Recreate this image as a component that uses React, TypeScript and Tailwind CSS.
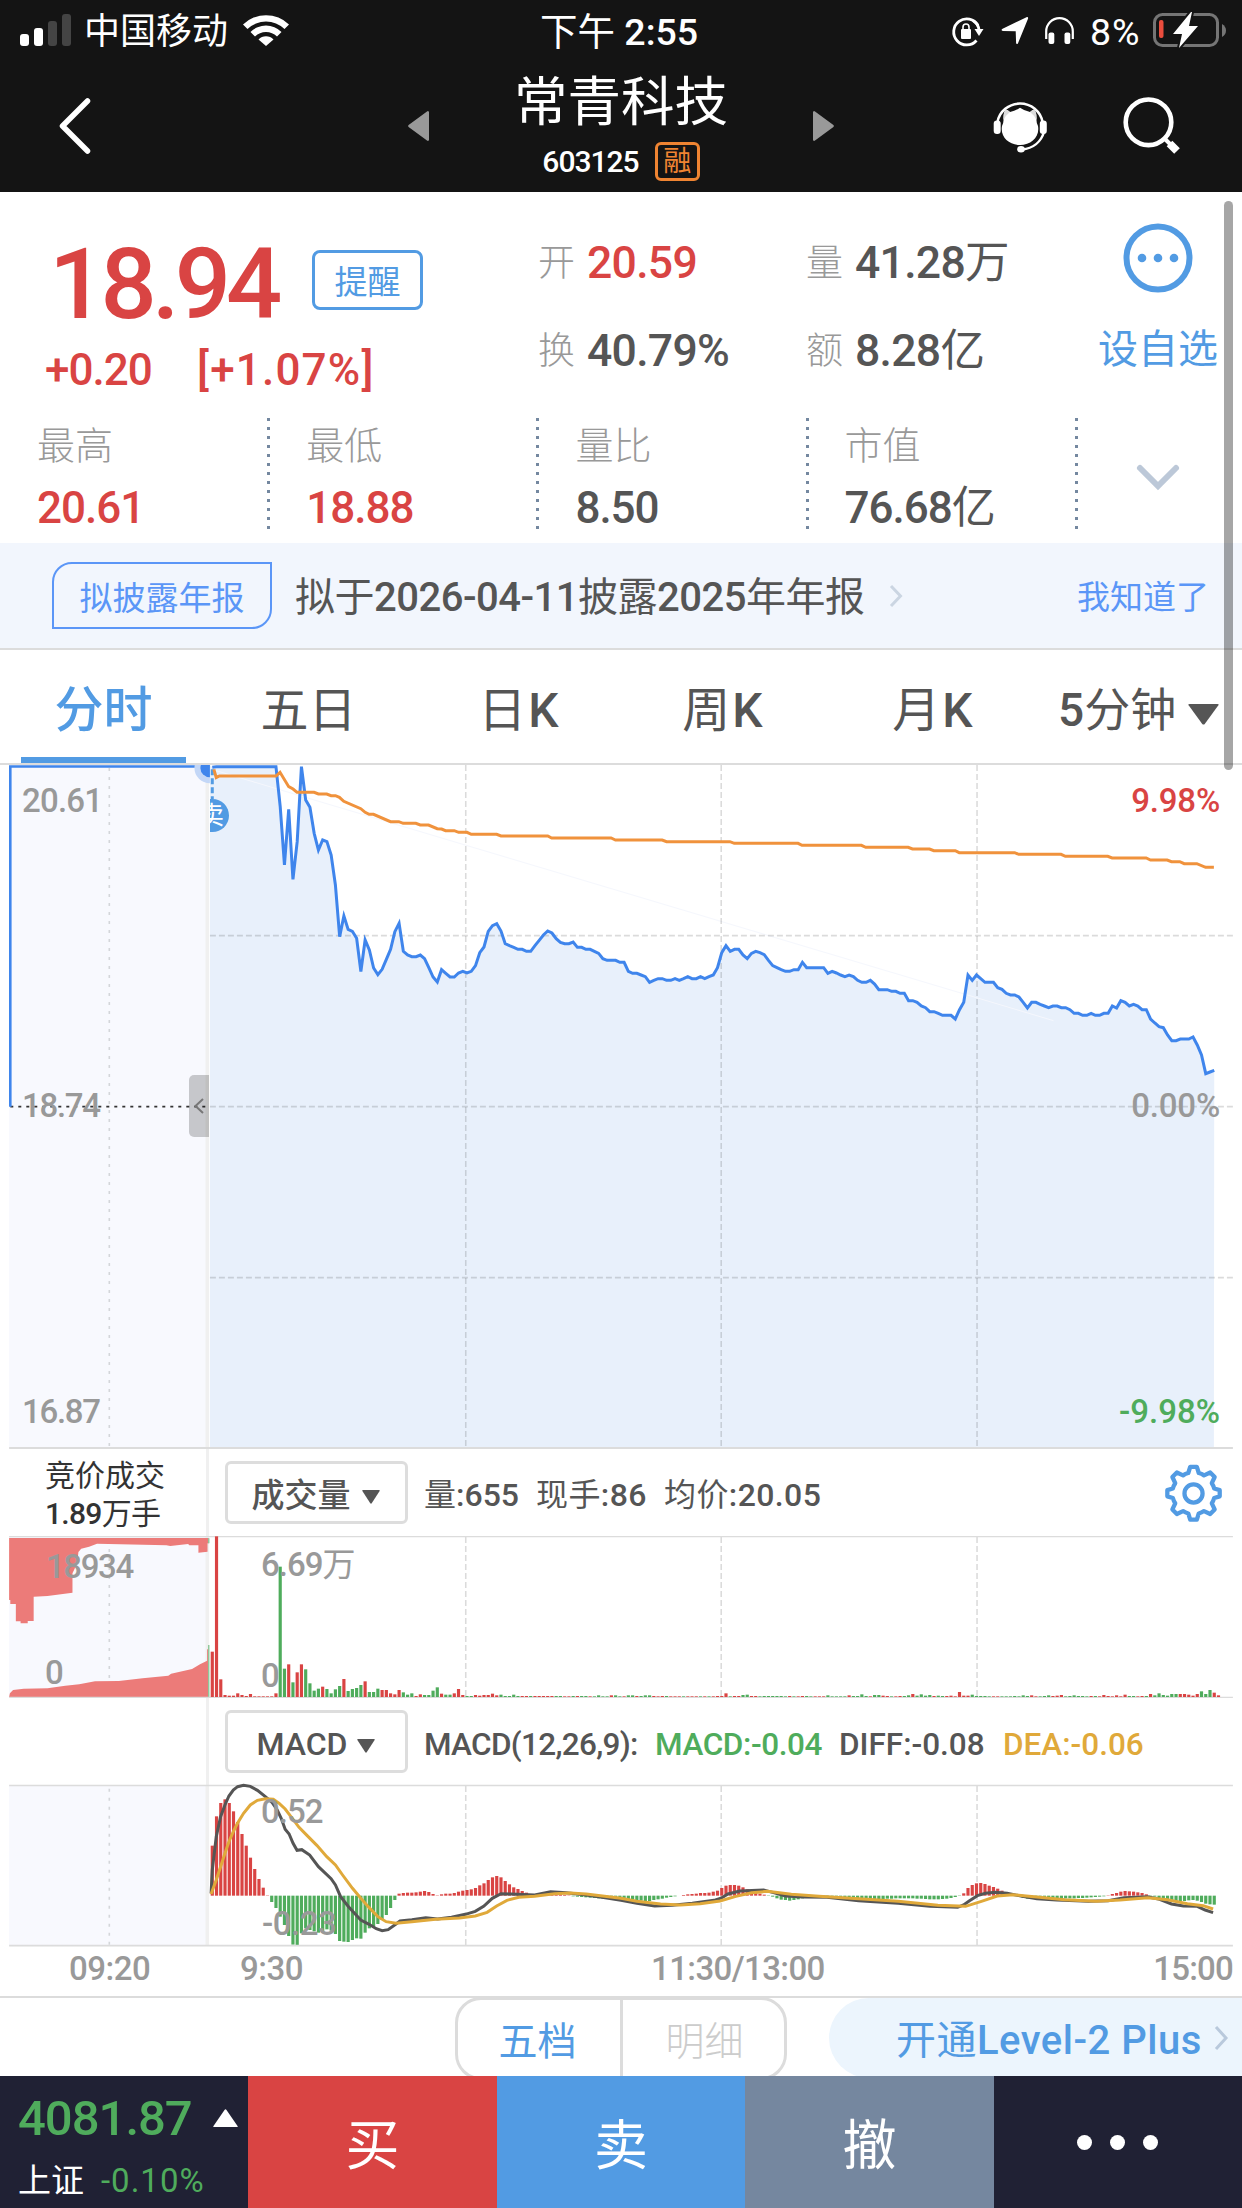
import React from 'react';

// Chart coordinates: x runs 0..3136 over the full width, y is three units per pixel
const FIRST_X = 536;
const STEP = 10.72;
const GRID_X = [1176, 1821, 2467];

const prices = [
  382, 380, 380, 380, 380, 380, 380, 380, 380, 380, 380, 380, 380, 380, 380, 380,
  500, 675, 508, 718, 605, 380, 480, 502, 580, 630, 600, 605, 645, 735, 890, 828,
  868, 874, 895, 995, 900, 930, 984, 1004, 988, 958, 928, 875, 850, 934, 945, 950,
  950, 945, 956, 983, 1011, 1026, 989, 1000, 1011, 1011, 999, 994, 999, 994, 977, 938,
  921, 874, 857, 851, 873, 911, 917, 922, 928, 928, 934, 934, 917, 901, 885, 873,
  879, 896, 907, 911, 911, 906, 922, 922, 928, 928, 934, 940, 956, 961, 961, 961,
  967, 967, 994, 1000, 1000, 1005, 1010, 1027, 1021, 1016, 1016, 1021, 1021, 1016, 1021, 1016,
  1010, 1016, 1016, 1010, 1016, 1010, 1005, 983, 938, 917, 934, 928, 928, 945, 956, 940,
  934, 938, 944, 961, 977, 983, 989, 994, 994, 989, 989, 967, 983, 983, 983, 983,
  983, 1000, 994, 999, 1005, 1010, 1005, 1010, 1021, 1027, 1027, 1021, 1032, 1049, 1049, 1049,
  1054, 1054, 1060, 1060, 1082, 1082, 1087, 1098, 1103, 1115, 1115, 1120, 1126, 1126, 1126, 1137,
  1109, 1087, 1005, 1021, 1005, 1016, 1027, 1027, 1027, 1043, 1048, 1060, 1065, 1065, 1071, 1087,
  1104, 1087, 1087, 1093, 1098, 1103, 1098, 1098, 1103, 1103, 1109, 1120, 1120, 1126, 1126, 1120,
  1126, 1126, 1120, 1120, 1098, 1104, 1082, 1087, 1098, 1093, 1098, 1109, 1109, 1137, 1149, 1160,
  1163, 1185, 1202, 1202, 1197, 1197, 1197, 1191, 1215, 1245, 1301, 1296, 1291
];

const averageLine =
  '540,388 546,413 554,408 697,408 707,397 729,440 740,447 750,457 793,457 804,462 825,462 836,467 847,467 857,472 868,484 911,506 922,517 932,523 943,523 986,545 1007,545 1018,550 1050,550 1061,555 1082,555 1104,566 1115,567 1125,572 1147,572 1158,577 1179,577 1190,583 1254,583 1265,588 1383,588 1393,594 1543,594 1554,600 1672,600 1683,605 1843,605 1854,610 2015,610 2025,616 2175,616 2186,622 2293,622 2304,627 2347,627 2358,632 2412,632 2422,638 2562,638 2572,643 2679,643 2690,649 2797,649 2808,654 2894,654 2905,660 2947,660 2958,665 2979,665 2990,671 3022,671 3044,682 3065,682';

// Positive bars are drawn red, negative ones green
const volumes = [
  136, 482, 53, 6, 4, 4, 11, 6, 3, 9, 2, 2, 2, 2, 2, 11,
  -391, -85, 98, -44, 74, 98, -83, -41, -19, -25, 31, -24, -11, -23, -33, 54,
  -18, -24, -27, -36, 47, -15, -15, -25, 21, 21, 11, 8, 21, -14, -7, -11,
  3, 8, -6, -6, -19, -29, 10, -7, -7, 11, 24, 6, -3, -3, 6, 4,
  6, 6, 10, 5, -7, -3, -3, -7, -3, 3, 3, -3, 3, 3, 3, 3,
  3, -3, -3, 2, 2, -3, 3, -3, -3, 2, -2, -5, -2, -2, 5, -5,
  -2, 2, -5, -5, 3, -3, -5, -5, 3, 2, 3, -3, 2, 2, 2, -2,
  2, 2, 2, -2, 2, -2, 2, 3, 3, 11, -2, 3, 3, -6, -7, 3,
  3, -2, -3, -3, -3, -3, -3, -2, 3, -2, 2, 3, -3, -2, 2, 2,
  2, -5, -2, -2, -2, -2, 5, -3, -3, -8, -3, 2, -6, -6, 4, 3,
  -2, 2, 3, -3, -5, 9, -4, -8, -4, -6, 3, -4, -3, 3, 4, 2,
  15, 4, 4, -7, -3, -3, -3, -2, 2, 2, -2, -2, -2, -3, -2, -5,
  -3, 5, 2, -2, -3, -5, 3, 4, 6, -2, -3, -5, -3, -3, -2, 3,
  -3, 2, 6, 3, 2, 5, 2, 7, -3, -3, 2, 3, -3, 9, -5, -11,
  -6, -4, -9, -9, 9, 9, 7, 4, 9, -17, -9, -21, 13, 5
];

const macdBars = [
  150, 238, 278, 289, 278, 253, 221, 185, 150, 114, 80, 50, 24, 1, -19, -37,
  -63, -88, -121, -147, -149, -113, -98, -103, -107, -111, -107, -101, -105, -115, -136, -138,
  -139, -133, -128, -129, -111, -98, -93, -85, -73, -58, -37, -13, 6, 8, 9, 9,
  10, 12, 14, 11, 5, 1, 4, 6, 6, 8, 12, 15, 17, 19, 23, 31,
  37, 47, 55, 59, 55, 44, 34, 25, 20, 14, 9, 5, 3, 5, 5, 6,
  6, 6, 4, 2, 1, -2, -3, -4, -5, -6, -7, -8, -9, -10, -11, -12,
  -12, -11, -12, -12, -14, -15, -16, -16, -13, -11, -9, -6, -4, -2, 0, 2,
  4, 5, 6, 8, 8, 9, 12, 15, 23, 30, 32, 32, 30, 25, 19, 14,
  10, 6, 3, -1, -3, -8, -12, -13, -15, -13, -11, -8, -4, -3, -3, -3,
  -3, -4, -4, -5, -6, -7, -8, -8, -9, -10, -10, -10, -11, -10, -10, -9,
  -9, -8, -8, -8, -8, -8, -9, -9, -10, -11, -11, -11, -10, -9, -7, -4,
  -1, 7, 23, 32, 37, 38, 35, 30, 26, 21, 15, 9, 4, -1, -4, -7,
  -9, -9, -9, -9, -9, -9, -9, -9, -9, -8, -8, -8, -7, -7, -6, -5,
  -4, -3, -2, 1, 5, 8, 12, 14, 13, 12, 10, 8, 4, -1, -3, -7,
  -10, -12, -15, -18, -18, -16, -14, -13, -15, -19, -24, -26, -27
];

const diffPath =
  'M533 610L536 540L546 440L557 380L568 345L578 318L589 300L600 290L615 286L632 289L650 301L670 320L686 336L700 360L710 385L720 418L730 432L740 460L750 481L762 479L782 495L804 530L836 566L847 585L860 620L880 650L911 690L932 703L950 716L965 722L980 719L1000 702L1010 693L1040 689L1075 683L1105 687L1140 682L1175 673L1200 664L1222 648L1243 625L1265 611L1290 612L1350 615L1390 605L1430 608L1480 615L1520 622L1568 631L1608 640L1653 648L1698 646L1748 640L1803 631L1822 624L1838 612L1868 603L1928 600L1953 608L1983 618L2028 621L2088 622L2168 632L2268 640L2348 649L2418 652L2433 645L2448 632L2468 617L2488 610L2513 607L2543 610L2578 618L2618 626L2668 630L2748 634L2798 632L2838 623L2898 620L2928 628L2958 642L2988 648L3023 649L3043 660L3063 668';

const deaPath =
  'M533 612L546 570L557 530L568 490L578 455L589 425L600 399L615 370L632 345L650 331L670 326L690 328L705 340L720 357L740 388L755 412L775 436L800 466L825 500L847 525L865 555L890 595L911 625L932 653L954 680L975 695L1000 700L1040 695L1100 688L1160 684L1200 678L1230 667L1254 648L1280 631L1310 622L1350 619L1400 611L1440 609L1480 612L1568 625L1608 634L1668 642L1718 645L1768 641L1818 633L1858 619L1898 608L1938 604L1998 613L2068 619L2168 626L2268 634L2368 646L2438 649L2478 634L2518 618L2558 614L2618 621L2688 629L2768 634L2828 630L2898 623L2948 629L2998 641L3038 647L3063 657';

const pricePoints = prices.map((y, i) => `${FIRST_X + i * STEP},${y}`).join(' ');

// Chinese runs keep the regular weight inside medium-weight numbers
const Mixed = ({ children }: { children: string }) => (
  <>
    {children.split(/([\u4e00-\u9fff]+)/).map((part, i) =>
      i % 2 ? <span key={i} className="font-normal">{part}</span> : part
    )}
  </>
);

const GridLines = ({ top, bottom }: { top: number; bottom: number }) => (
  <>
    {GRID_X.map((x) => (
      <line key={x} x1={x} x2={x} y1={top} y2={bottom} stroke="#000" strokeOpacity={0.14} strokeWidth={1.6} strokeDasharray="6 3" vectorEffect="non-scaling-stroke" />
    ))}
  </>
);

const AuctionPanel = ({ top, bottom }: { top: number; bottom: number }) => (
  <>
    <rect x={23} y={top} width={497} height={bottom - top} fill="#f8f9fe" />
    <line x1={276} x2={276} y1={top + 9} y2={bottom} stroke="#d4d6da" strokeWidth={1.6} strokeDasharray="3 6" vectorEffect="non-scaling-stroke" />
  </>
);

const Bars = ({ data, base, upward }: { data: number[]; base: number; upward?: boolean }) => (
  <>
    {data.map((v, i) => (
      <rect
        key={i}
        x={FIRST_X + i * STEP - 4}
        y={v > 0 || upward ? base - Math.abs(v) : base}
        width={8}
        height={Math.abs(v)}
        fill={v > 0 ? '#d94443' : '#4fac5c'}
      />
    ))}
  </>
);

const Triangle = ({ className }: { className: string }) => (
  <svg viewBox="0 0 20 16" preserveAspectRatio="none" className={className}>
    <path d="M1 0h18q1.200 0 .6 1L10.800 15.200q-.8 1-1.600 0L.4 1Q-.2 0 1 0z" fill="currentColor" />
  </svg>
);

const StatusBar = () => (
  <div className="flex h-[64px] items-start text-white">
    <svg className="ml-[19px] mt-[13px] h-[34px] w-[53px]" viewBox="19 13 53 34">
      <rect x="20" y="34" width="9" height="12" rx="3" fill="#fff" />
      <rect x="34" y="28" width="9" height="18" rx="3" fill="#fff" />
      <rect x="48" y="21" width="9" height="25" rx="3" fill="#444" />
      <rect x="62" y="14" width="9" height="32" rx="3" fill="#444" />
    </svg>
    <span className="ml-[12px] mt-[6px] w-[146px] text-[36px] leading-[52px]">中国移动</span>
    <svg className="ml-[12px] mt-[12px] h-[36px] w-[48px]" viewBox="242 12 48 36">
      <path d="M243 24.500a33 33 0 0 1 46 0l-4.500 4.500a26.500 26.500 0 0 0-37 0z" fill="#fff" />
      <path d="M250.500 32a22 22 0 0 1 31 0l-4.500 4.500a15.500 15.500 0 0 0-22 0z" fill="#fff" />
      <path d="M258.500 39.500a10.500 10.500 0 0 1 15 0L266 46z" fill="#fff" />
    </svg>
    <span className="ml-[250px] mt-[6px] w-[162px] whitespace-nowrap text-[37.500px] font-medium leading-[52px]"><Mixed>下午 2:55</Mixed></span>
    <svg className="ml-[247px] mt-[10px] h-[40px] w-[130px]" viewBox="949 10 130 40">
      <path d="M978 25.500A13 13 0 1 0 976.500 40.500" fill="none" stroke="#fff" strokeWidth="2.800" />
      <path d="M973 20.500A13 13 0 0 1 979 30" fill="none" stroke="#fff" strokeWidth="2.800" />
      <path d="M974.500 29h9l-4.500 7z" fill="#fff" />
      <rect x="961" y="29" width="10" height="10" rx="1" fill="#fff" />
      <path d="M963 30v-3a3 3 0 0 1 6 0V30" fill="none" stroke="#fff" strokeWidth="1.600" />
      <path d="M1026.500 17.200c1.200-.5 2 .2 1.500 1.500l-10 24.500c-.6 1.300-1.800 1.200-1.900-.2l-.4-11.700-12.800-.4c-1.700 0-1.700-1.500-.3-2.100z" fill="#fff" />
      <path d="M1046.200 39V31.500a13.300 13.300 0 0 1 26.600 0V39" fill="none" stroke="#fff" strokeWidth="2.200" />
      <rect x="1048.500" y="32.500" width="5.800" height="11.500" rx="2" fill="#fff" />
      <rect x="1064.500" y="32.500" width="5.800" height="11.500" rx="2" fill="#fff" />
    </svg>
    <span className="ml-[11px] mt-[6px] w-[57px] text-[37.500px] leading-[52px] tracking-[1px]">8%</span>
    <svg className="ml-[4px] mt-[10px] h-[42px] w-[80px]" viewBox="1151 10 80 42">
      <rect x="1154.500" y="14.500" width="63" height="31" rx="8" fill="none" stroke="#757575" strokeWidth="3" />
      <path d="M1222 24v13q4-2.500 4-6.500t-4-6.500z" fill="#757575" />
      <rect x="1159" y="20" width="4.500" height="18" rx="2" fill="#eb4d3d" />
      <path d="M1191 12l-18 22h9l-3 14 19-22h-9l3-14z" fill="#fff" stroke="#141414" strokeWidth="4" paintOrder="stroke" strokeLinejoin="round" />
    </svg>
  </div>
);

const Header = () => (
  <div className="grid h-[128px] grid-cols-[400px_1fr_400px] text-white">
    <div className="pl-[57px] pt-[33px]">
      <svg className="h-[58px] w-[36px]" viewBox="58 97 36 58">
        <path d="M88.500 101L63.500 126L88.500 151" fill="none" stroke="#fff" strokeWidth="5.500" strokeLinecap="round" strokeLinejoin="round" />
      </svg>
    </div>
    <div className="flex justify-between px-[8px] text-[#999]">
      <svg className="mt-[47px] h-[30px] w-[21px]" viewBox="0 0 21 30"><path d="M21 1v28q-.8 1.500-2 .5L.6 16q-.9-1 0-2L19 .5q1.200-1 2 .5z" fill="currentColor" /></svg>
      <div className="flex flex-col items-center text-white">
        <div className="mt-[6px] text-[53.500px] leading-[66px]">常青科技</div>
        <div className="mt-[5px] flex items-center">
          <span className="mt-[1px] text-[30px] font-medium leading-[39px] tracking-[-1px]">603125</span>
          <span className="ml-[16px] flex h-[39px] w-[45px] items-center justify-center rounded-[6px] border-[3px] border-[#ef8432] pt-[2px] text-[28px] leading-none text-[#ef8432]">融</span>
        </div>
      </div>
      <svg className="mt-[47px] h-[30px] w-[21px] -scale-x-100" viewBox="0 0 21 30"><path d="M21 1v28q-.8 1.500-2 .5L.6 16q-.9-1 0-2L19 .5q1.200-1 2 .5z" fill="currentColor" /></svg>
    </div>
    <div className="flex pl-[149px] pt-[30px]">
      <svg className="h-[60px] w-[60px]" viewBox="991 94 60 60">
        <path d="M997.500 122a22.800 22 0 0 1 45 0" fill="none" stroke="#fff" strokeWidth="2.500" />
        <rect x="993.700" y="120.500" width="7" height="13.500" rx="3.300" fill="#fff" />
        <rect x="1039.800" y="120.500" width="7" height="13.500" rx="3.300" fill="#fff" />
        <path d="M1044 132c-3 10-11 16.500-22 17.500" fill="none" stroke="#fff" strokeWidth="2.500" />
        <ellipse cx="1021" cy="149.300" rx="3.800" ry="3.300" fill="#fff" />
        <path d="M1003.500 118q.3-7 2.500-8.500 1.500 0 4 2.500 5.500-1 10-4.200 4.500 3.200 10 4.200 2.500-2.500 4-2.500 2.200 1.500 2.500 8.500-.5 4 1.500 8c2 11-7 19-18 19s-20-8-18-19q2-4 1.500-8z" fill="#fff" />
        <path d="M1006 109.500q2 .5 4 2.500-4 3-6.500 8-.5-8.500 2.500-10.500zM1034 109.500q-2 .5-4 2.500 4 3 6.500 8 .5-8.500-2.500-10.500z" fill="#ddd" />
      </svg>
      <svg className="ml-[70px] h-[64px] w-[64px]" viewBox="1121 94 64 64">
        <circle cx="1148.500" cy="122.300" r="22.800" fill="none" stroke="#fff" strokeWidth="4.600" />
        <path d="M1164 138l6 6" stroke="#fff" strokeWidth="4" />
        <path d="M1169.500 143.500l7.500 7.500" stroke="#fff" strokeWidth="8" />
      </svg>
    </div>
  </div>
);

const quotes = [
  { label: '开', value: '20.59', color: 'text-[#d94443]' },
  { label: '量', value: '41.28万', color: 'text-[#555]' },
  { label: '换', value: '40.79%', color: 'text-[#555]' },
  { label: '额', value: '8.28亿', color: 'text-[#555]' }
];

const stats = [
  { label: '最高', value: '20.61', color: 'text-[#d94443]' },
  { label: '最低', value: '18.88', color: 'text-[#d94443]' },
  { label: '量比', value: '8.50', color: 'text-[#555]' },
  { label: '市值', value: '76.68亿', color: 'text-[#555]' }
];

const QuotePanel = () => (
  <div className="h-[351px]">
    <div className="flex h-[226px]">
      <div className="w-[538px]">
        <div className="flex">
          <span className="ml-[49px] mt-[42px] w-[263px] text-[99px] font-medium leading-[100px] tracking-[-4.800px] text-[#d94443]">18.94</span>
          <span className="mt-[58px] flex h-[60px] w-[111px] items-center justify-center rounded-[8px] border-[3px] border-[#529be3] pt-[4px] text-[33px] leading-none text-[#529be3]">提醒</span>
        </div>
        <div className="ml-[45px] mt-[11px] flex whitespace-nowrap text-[44px] font-medium leading-[50px] text-[#d94443]">
          <span className="w-[152px] tracking-[-1px]">+0.20</span>
          <span className="tracking-[1.200px]">[+1.07%]</span>
        </div>
      </div>
      <div className="grid w-[540px] grid-cols-[268px_1fr] grid-rows-[88px_88px] pt-[27px]">
        {quotes.map((quote) => (
          <div key={quote.label} className="flex items-center whitespace-nowrap">
            <span className="w-[49px] pt-[1px] text-[37px] font-light text-[#999]">{quote.label}</span>
            <span className={`text-[44.500px] font-medium tracking-[-0.700px] ${quote.color}`}><Mixed>{quote.value}</Mixed></span>
          </div>
        ))}
      </div>
      <div className="flex w-[160px] flex-col items-center">
        <svg className="mt-[31px] h-[70px] w-[70px]" viewBox="0 0 70 70">
          <circle cx="35" cy="35" r="31.500" fill="none" stroke="#529be3" strokeWidth="6" />
          <circle cx="19" cy="35" r="4.300" fill="#529be3" />
          <circle cx="35" cy="35" r="4.300" fill="#529be3" />
          <circle cx="51" cy="35" r="4.300" fill="#529be3" />
        </svg>
        <span className="mt-[29px] whitespace-nowrap text-[40px] leading-[56px] text-[#529be3]">设自选</span>
      </div>
    </div>
    <div className="flex h-[112px]">
      {stats.map((stat) => (
        <div key={stat.label} className="flex w-[269.200px] justify-between">
          <div className="pl-[37px] whitespace-nowrap">
            <div className="mt-[1px] text-[38px] font-light leading-[54px] text-[#999]">{stat.label}</div>
            <div className={`mt-[8px] text-[44px] font-medium leading-[54px] tracking-[-1px] ${stat.color}`}><Mixed>{stat.value}</Mixed></div>
          </div>
          <div className="-mr-[1px] w-[3px] bg-[repeating-linear-gradient(to_bottom,#7488a0_0px_3px,transparent_3px_9px)]" />
        </div>
      ))}
      <svg className="ml-[58px] mt-[44px] h-[30px] w-[46px]" viewBox="0 0 46 30">
        <path d="M5 6l18 18L41 6" fill="none" stroke="#bcc8d8" strokeWidth="6" strokeLinecap="round" />
      </svg>
    </div>
  </div>
);

const NoticeBar = () => (
  <div className="flex h-[107px] items-center border-b-[2px] border-[#dcdcdc] bg-[#f2f6fd] whitespace-nowrap">
    <span className="ml-[52px] flex h-[67px] w-[220px] items-center justify-center rounded-br-[20px] rounded-tl-[20px] border-[2px] border-[#5b96f7] pt-[5px] text-[33px] leading-none text-[#5b96f7]">拟披露年报</span>
    <span className="ml-[23px] w-[594px] pt-[5px] text-[40px] font-medium tracking-[-0.500px] text-[#555]"><Mixed>拟于2026-04-11披露2025年年报</Mixed></span>
    <svg className="h-[24px] w-[14px]" viewBox="0 0 14 24"><path d="M2 2l9.500 10L2 22" fill="none" stroke="#cbd5e2" strokeWidth="3" /></svg>
    <span className="ml-[174px] pt-[5px] text-[33px] text-[#5b96f7]">我知道了</span>
  </div>
);

const Tabs = () => (
  <div className="flex h-[115px] border-b-[2px] border-[#dcdcdc] text-[48px] leading-[121px] text-[#555] whitespace-nowrap">
    <div className="ml-[21px] h-[113px] w-[165px] border-b-[6px] border-[#529be3] text-center text-[49px] font-medium text-[#529be3]">分时</div>
    <div className="w-[245px] text-center">五日</div>
    <div className="w-[175px] text-center">日<span className="ml-[2px] font-medium">K</span></div>
    <div className="w-[233px] text-center">周<span className="ml-[2px] font-medium">K</span></div>
    <div className="w-[187px] text-center">月<span className="ml-[2px] font-medium">K</span></div>
    <div className="ml-[32px] flex text-[46px]">
      <span className="font-medium">5</span>分钟
      <Triangle className="ml-[12px] mt-[54px] h-[21px] w-[31px]" />
    </div>
  </div>
);

const PriceChart = () => (
  <div className="relative h-[684px] text-[33px] font-medium leading-[40px] tracking-[-0.800px] text-[#999]">
    <svg className="block h-[684px] w-full" viewBox="0 375 3136 2052" preserveAspectRatio="none">
      <AuctionPanel top={375} bottom={2425} />
      <rect x={519} y={384} width={9} height={2043} fill="#f0f0f0" />
      <polygon points={`530,375 ${pricePoints} 3065,2425 530,2425`} fill="#e8f0fb" />
      <line x1={540} y1={390} x2={2660} y2={1142} stroke="#f5f7fd" strokeWidth={1} vectorEffect="non-scaling-stroke" />
      <GridLines top={375} bottom={2425} />
      {[887, 1400, 1913].map((y) => (
        <line key={y} x1={530} x2={3113} y1={y} y2={y} stroke="#000" strokeOpacity={0.14} strokeWidth={1.600} strokeDasharray="6 3" vectorEffect="non-scaling-stroke" />
      ))}
      <line x1={26} x2={530} y1={1400} y2={1400} stroke="#333" strokeWidth={1.800} strokeDasharray="3 5" vectorEffect="non-scaling-stroke" />
      <path d="M26 1400V379.500H530" fill="none" stroke="#3f85ec" strokeWidth={2.600} vectorEffect="non-scaling-stroke" />
      <ellipse cx={530} cy={384} rx={39} ry={46} fill="#c3d7f7" clipPath="url(#auction)" />
      <ellipse cx={530} cy={384} rx={24} ry={28} fill="#3f85ec" clipPath="url(#auction)" />
      <clipPath id="auction"><rect x={0} y={375} width={530} height={100} /></clipPath>
      <path d="M536 388V478" stroke="#529be3" strokeWidth={3} strokeDasharray="6 3" vectorEffect="non-scaling-stroke" />
      <polyline points={pricePoints} fill="none" stroke="#3f85ec" strokeWidth={3} vectorEffect="non-scaling-stroke" />
      <polyline points={averageLine} fill="none" stroke="#f0923c" strokeWidth={3} vectorEffect="non-scaling-stroke" />
      <line x1={23} x2={3113} y1={2424} y2={2424} stroke="#dcdcdc" strokeWidth={2} vectorEffect="non-scaling-stroke" />
    </svg>
    <div className="absolute left-[210px] top-[34px] h-[33px] w-[19px] overflow-hidden rounded-r-full bg-[#529be3]">
      <span className="absolute left-[-11px] top-0 text-[25px] font-normal leading-[34px] text-white">卖</span>
    </div>
    <div className="absolute left-[189px] top-[310px] flex h-[62px] w-[20px] items-center justify-center rounded-l-[5px] bg-black/20">
      <svg className="h-[16px] w-[10px]" viewBox="0 0 10 16"><path d="M9 1L1.500 8L9 15" fill="none" stroke="#777" strokeWidth="2" /></svg>
    </div>
    <span className="absolute left-[22px] top-[16px]">20.61</span>
    <span className="absolute left-[22px] top-[321px] tracking-[-1.300px]">18.74</span>
    <span className="absolute left-[22px] top-[627px] tracking-[-1.300px]">16.87</span>
    <span className="absolute right-[22px] top-[16px] tracking-[-0.200px] text-[#d94443]">9.98%</span>
    <span className="absolute right-[22px] top-[321px] tracking-[-0.200px]">0.00%</span>
    <span className="absolute right-[22px] top-[627px] tracking-normal text-[#4fac5c]">-9.98%</span>
  </div>
);

const VolumeHeader = () => (
  <div className="flex h-[87px] items-center text-[#555] whitespace-nowrap">
    <div className="flex h-full w-[209px] flex-col justify-center border-r-[3px] border-[#f0f0f0] pl-[45px] pt-[5px] text-[30px] leading-[38px] text-[#333]">
      <span>竞价成交</span>
      <span className="font-medium tracking-[-0.700px]"><Mixed>1.89万手</Mixed></span>
    </div>
    <div className="ml-[16px] flex h-[63px] w-[183px] items-center justify-center rounded-[6px] border-[3px] border-[#ddd] pr-[2px] pt-[5px] text-[33px] font-medium leading-none">
      成交量
      <Triangle className="ml-[11px] mt-[4px] h-[14px] w-[18px]" />
    </div>
    <span className="ml-[16px] w-[112px] pt-[5px] text-[32px] font-medium"><Mixed>量:655</Mixed></span>
    <span className="w-[128px] pt-[5px] text-[32px] font-medium tracking-[0.400px]"><Mixed>现手:86</Mixed></span>
    <span className="pt-[5px] text-[32px] font-medium tracking-[0.400px]"><Mixed>均价:20.05</Mixed></span>
    <svg className="ml-auto mr-[18px] h-[60px] w-[60px]" viewBox="-31 -31.500 63 63">
      <path
        d="M-3.500 -27.500h7l2 6.500q3 .8 5.500 2.500l6.500-3 4.700 4.700-3 6.500q1.700 2.500 2.500 5.500l5.800 1.800v6.500l-5.800 1.800q-.8 3-2.500 5.500l3 6.500-4.700 4.700-6.500-3q-2.500 1.700-5.500 2.500l-2 6.500h-7l-2-6.500q-3-.8-5.500-2.500l-6.500 3-4.700-4.700 3-6.500q-1.700-2.500-2.500-5.500l-5.800-1.800v-6.500l5.800-1.800q.8-3 2.500-5.500l-3-6.500 4.700-4.700 6.500 3q2.500-1.700 5.500-2.500z"
        fill="none"
        stroke="#529be3"
        strokeWidth="4.500"
        strokeLinejoin="round"
      />
      <circle cy="0.500" r="9.500" fill="none" stroke="#529be3" strokeWidth="4.500" />
    </svg>
  </div>
);

const VolumeChart = () => (
  <div className="relative h-[162px] text-[33px] font-medium leading-[40px] tracking-[-1px] text-[#999]">
    <svg className="block h-[162px] w-full" viewBox="0 408 3136 486" preserveAspectRatio="none">
      <AuctionPanel top={411} bottom={891} />
      <rect x={519} y={408} width={9} height={486} fill="#f0f0f0" />
      <GridLines top={411} bottom={891} />
      <path d="M23 414H527V430H524V455L501 458V436H478L475 432L430 438L420 436L245 431L225 440L205 446L198 456L195 490L183 520V578L120 588L85 590V663H70V670H52V664H40V612H26V600H23z" fill="#ec7b79" />
      <path d="M23 891L25 880L33 870L60 866L120 865L165 857L200 853L240 844L300 843L360 835L425 827L432 821L485 807L505 793L523 782V748H527V891z" fill="#ec7b79" />
      <path d="M527 735V891M527 415V430" stroke="#8fc79a" strokeWidth={1.500} vectorEffect="non-scaling-stroke" />
      <path d="M23 409.500H3113M23 892.500H3113" stroke="#dcdcdc" strokeWidth={1.600} vectorEffect="non-scaling-stroke" />
      <Bars data={volumes} base={891} upward />
    </svg>
    <span className="absolute left-[46px] top-[11px] tracking-[-1.400px]">18934</span>
    <span className="absolute left-[45px] top-[117px]">0</span>
    <span className="absolute left-[261px] top-[9px]"><Mixed>6.69万</Mixed></span>
    <span className="absolute left-[261px] top-[120px]">0</span>
  </div>
);

const MacdHeader = () => (
  <div className="flex h-[87px] items-center text-[31.500px] font-medium text-[#555] whitespace-nowrap">
    <div className="h-full w-[209px] border-r-[3px] border-[#f0f0f0]" />
    <div className="ml-[16px] flex h-[63px] w-[183px] items-center justify-center rounded-[6px] border-[3px] border-[#ddd] pr-[2px] pt-[4px] text-[32px] leading-none">
      MACD
      <Triangle className="ml-[9px] mt-[5px] h-[14px] w-[18px]" />
    </div>
    <span className="ml-[16px] w-[231px] pt-[6px] tracking-[-0.700px]">MACD(12,26,9):</span>
    <span className="w-[184px] pt-[6px] tracking-[-0.400px] text-[#4fac5c]">MACD:-0.04</span>
    <span className="w-[164px] pt-[6px]">DIFF:-0.08</span>
    <span className="pt-[6px] text-[#e0a93a]">DEA:-0.06</span>
  </div>
);

const MacdChart = () => (
  <div className="relative h-[161px] text-[33px] font-medium leading-[40px] tracking-[-1px] text-[#999]">
    <svg className="block h-[161px] w-full overflow-visible" viewBox="0 285 3136 483" preserveAspectRatio="none">
      <AuctionPanel top={287} bottom={766} />
      <rect x={519} y={285} width={9} height={483} fill="#f0f0f0" />
      <GridLines top={288} bottom={766} />
      <Bars data={macdBars} base={617} />
      <path d="M23 286.500H3113M23 767H3113" stroke="#dcdcdc" strokeWidth={1.600} vectorEffect="non-scaling-stroke" />
      <path d={diffPath} fill="none" stroke="#555" strokeWidth={3} vectorEffect="non-scaling-stroke" />
      <path d={deaPath} fill="none" stroke="#e0a93a" strokeWidth={3} vectorEffect="non-scaling-stroke" />
    </svg>
    <span className="absolute left-[261px] top-[7px]">0.52</span>
    <span className="absolute left-[262px] top-[119px] tracking-[-0.500px]">-0.23</span>
  </div>
);

const TimeAxis = () => (
  <div className="flex h-[50px] pt-[1px] text-[33px] font-medium leading-[44px] tracking-[-0.500px] text-[#999] whitespace-nowrap">
    <span className="ml-[69px] w-[171px]">09:20</span>
    <span className="w-[411px]">9:30</span>
    <span className="tracking-[-0.600px]">11:30/13:00</span>
    <span className="ml-auto mr-[9px] tracking-[-0.800px]">15:00</span>
  </div>
);

const LevelRow = () => (
  <div className="flex h-[80px] overflow-hidden border-t-[2px] border-[#dcdcdc] whitespace-nowrap">
    <div className="-mt-[1px] ml-[455px] flex h-[83px] w-[332px] shrink-0 rounded-[26px] border-[3px] border-[#dcdcdc] text-[39px] leading-[84px]">
      <span className="w-[165px] border-r-[3px] border-[#dcdcdc] pr-[3px] text-center text-[#529be3]">五档</span>
      <span className="w-[161px] pl-[2px] text-center font-light text-[#ccc]">明细</span>
    </div>
    <div className="ml-[42px] flex h-[80px] w-[500px] shrink-0 items-center rounded-l-full bg-[#ecf5fd] pl-[67px] text-[40px] text-[#529be3]">
      <span className="w-[318px] pt-[5px] font-medium tracking-[0.500px]"><Mixed>开通Level-2 Plus</Mixed></span>
      <svg className="h-[26px] w-[15px]" viewBox="0 0 15 26"><path d="M2 2l10 11L2 24" fill="none" stroke="#b9c9dc" strokeWidth="3" /></svg>
    </div>
  </div>
);

const ActionBar = () => (
  <div className="grid h-[132px] grid-cols-5 grid-rows-[132px] text-center text-[54px] leading-[142px] text-white">
    <div className="bg-[#202134] pl-[18px] pt-[15px] text-left">
      <div className="flex items-center">
        <span className="w-[195px] text-[49px] font-medium leading-[56px] tracking-[-1px] text-[#4fac5c]">4081.87</span>
        <Triangle className="-mt-[3px] h-[18px] w-[25px] -scale-y-100" />
      </div>
      <div className="mt-[9px] flex items-center text-[33px] leading-[50px]">
        上证<span className="ml-[17px] tracking-[1px] text-[#4fac5c]">-0.10%</span>
      </div>
    </div>
    <div className="bg-[#d94443]">买</div>
    <div className="bg-[#529be3]">卖</div>
    <div className="bg-[#75879f]">撤</div>
    <div className="flex items-center justify-center gap-[18px] bg-[#202134]">
      <i className="h-[15px] w-[15px] rounded-full bg-white" />
      <i className="h-[15px] w-[15px] rounded-full bg-white" />
      <i className="h-[15px] w-[15px] rounded-full bg-white" />
    </div>
  </div>
);

const App = () => {
  return (
    <div className="relative h-[2208px] w-[1242px] overflow-hidden bg-white font-[Roboto,'Noto_Sans_CJK_SC',sans-serif]">
      <div className="bg-[#141414]">
        <StatusBar />
        <Header />
      </div>
      <QuotePanel />
      <NoticeBar />
      <Tabs />
      <PriceChart />
      <VolumeHeader />
      <VolumeChart />
      <MacdHeader />
      <MacdChart />
      <TimeAxis />
      <LevelRow />
      <ActionBar />

      {/* Scroll indicator */}
      <div className="absolute left-[1224px] top-[201px] h-[569px] w-[9px] rounded-full bg-black/35" />
    </div>
  );
};

export default App;
